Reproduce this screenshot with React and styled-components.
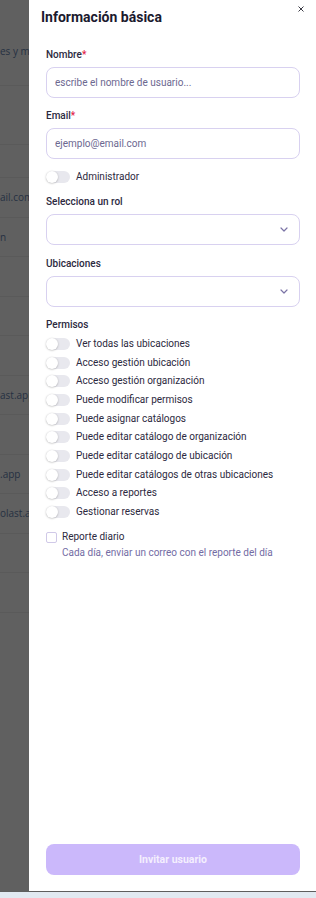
import React from 'react';
import styled, { createGlobalStyle } from 'styled-components';

const Global = createGlobalStyle`
  html, body { margin: 0; padding: 0; }
  body {
    width: 316px;
    height: 898px;
    overflow: hidden;
    font-family: Roboto, Inter, "Noto Sans", sans-serif;
    -webkit-font-smoothing: antialiased;
  }
  * { box-sizing: border-box; }
`;

const Screen = styled.div`
  width: 316px;
  height: 898px;
  display: flex;
  flex-direction: column;
`;

const Stage = styled.div`
  flex: 1;
  min-height: 0;
  display: flex;
`;

const BottomBar = styled.div`
  height: 7px;
  flex: none;
  border-top: 1px solid #5e5e5e;
  background: #e1e9f1;
`;

/* dimmed page behind the drawer */
const Backdrop = styled.div`
  width: 29px;
  flex: none;
  background: #606060;
  overflow: hidden;
  display: flex;
  flex-direction: column;
`;

const BgHeader = styled.div`
  height: 86px;
  flex: none;
  padding-top: 44px;
  border-bottom: 1px solid #5a5a5a;
`;

const BgRow = styled.div`
  height: ${(p) => p.$h}px;
  flex: none;
  display: flex;
  align-items: center;
  border-bottom: 1px solid #5a5a5a;
`;

const BgText = styled.span`
  display: block;
  white-space: nowrap;
  font-family: "Open Sans", "Noto Sans", sans-serif;
  font-size: 10px;
  line-height: 14px;
  color: #263042;
`;

/* drawer */
const Drawer = styled.aside`
  flex: 1;
  min-width: 0;
  background: #ffffff;
  display: flex;
  flex-direction: column;
`;

const Header = styled.header`
  display: flex;
  justify-content: space-between;
  align-items: flex-start;
  padding: 7px 10px 0 12px;
`;

const Title = styled.h2`
  margin: 0;
  font-size: 14px;
  line-height: 20px;
  font-weight: 700;
  color: #1b1a2e;
`;

const CloseButton = styled.button`
  width: 10px;
  height: 10px;
  margin-top: -3.5px;
  padding: 0;
  border: 0;
  background: none;
  display: flex;
  align-items: center;
  justify-content: center;
  color: #3a3a44;
  cursor: pointer;
`;

const Body = styled.div`
  padding: 20.6px 16px 0 17px;
  display: flex;
  flex-direction: column;
  gap: 11.3px;
`;

const Field = styled.div`
  display: flex;
  flex-direction: column;
  gap: 5px;
`;

const Label = styled.label`
  font-size: 10px;
  line-height: 14px;
  font-weight: 500;
  color: #2c2940;
`;

const Req = styled.span`
  color: #e11d48;
`;

const TextInput = styled.input`
  height: 31px;
  width: 100%;
  border: 1px solid #d8d1f0;
  border-radius: 8px;
  padding: 0 8px;
  font-family: inherit;
  font-size: 10px;
  color: #2c2940;
  background: #fff;
  outline: none;
  &::placeholder { color: #6c6890; }
`;

const Select = styled.div`
  height: 31px;
  border: 1px solid #d8d1f0;
  border-radius: 8px;
  display: flex;
  align-items: center;
  justify-content: flex-end;
  padding-right: 11px;
  color: #7b74a6;
`;

const ToggleRow = styled.div`
  display: flex;
  align-items: center;
  gap: 6px;
  height: 14px;
`;

const Track = styled.span`
  position: relative;
  width: 24px;
  height: 12px;
  flex: none;
  border-radius: 6px;
  background: #e8e8ee;
`;

const Knob = styled.span`
  position: absolute;
  left: 0;
  top: 0;
  width: 12px;
  height: 12px;
  border-radius: 50%;
  background: #ffffff;
  box-shadow: 0 0.5px 2px rgba(0, 0, 0, 0.28);
`;

const ToggleText = styled.span`
  font-size: 10px;
  line-height: 14px;
  font-weight: 400;
  color: #2c2940;
  white-space: nowrap;
`;

const ToggleList = styled.div`
  display: flex;
  flex-direction: column;
  gap: 4.67px;
`;

const Report = styled.div`
  display: flex;
  flex-direction: column;
  gap: 2px;
`;

const CheckRow = styled.div`
  display: flex;
  align-items: center;
  gap: 5px;
  height: 14px;
`;

const Box = styled.span`
  width: 11px;
  height: 11px;
  flex: none;
  border: 1px solid #d0c9e8;
  border-radius: 2px;
  background: #fff;
`;

const Hint = styled.p`
  margin: 0;
  padding-left: 16px;
  font-size: 10px;
  line-height: 14px;
  color: #736ca4;
`;

const Footer = styled.footer`
  margin-top: auto;
  padding: 0 16px 16px 17px;
`;

const SubmitButton = styled.button`
  width: 100%;
  height: 31px;
  border: 0;
  border-radius: 8px;
  background: #cbb8fb;
  color: #f4effe;
  font-family: inherit;
  font-size: 10.5px;
  font-weight: 700;
  cursor: not-allowed;
`;

const Toggle = ({ label }) => (
  <ToggleRow>
    <Track>
      <Knob />
    </Track>
    <ToggleText>{label}</ToggleText>
  </ToggleRow>
);

const Chevron = () => (
  <svg width="8" height="5" viewBox="0 0 8 5" fill="none">
    <polyline points="1,1 4,4 7,1" stroke="currentColor" strokeWidth="1.2" strokeLinecap="round" strokeLinejoin="round" />
  </svg>
);

const CloseIcon = () => (
  <svg width="6" height="6" viewBox="0 0 6 6" fill="none">
    <line x1="0.5" y1="0.5" x2="5.5" y2="5.5" stroke="currentColor" strokeWidth="1" />
    <line x1="5.5" y1="0.5" x2="0.5" y2="5.5" stroke="currentColor" strokeWidth="1" />
  </svg>
);

const permisos = [
  'Ver todas las ubicaciones',
  'Acceso gestión ubicación',
  'Acceso gestión organización',
  'Puede modificar permisos',
  'Puede asignar catálogos',
  'Puede editar catálogo de organización',
  'Puede editar catálogo de ubicación',
  'Puede editar catálogos de otras ubicaciones',
  'Acceso a reportes',
  'Gestionar reservas',
];

const bgRows = [
  { h: 59, t: '' },
  { h: 33, t: '' },
  { h: 39.5, t: 'ail.com' },
  { h: 39.5, t: 'n' },
  { h: 39.5, t: '' },
  { h: 39.5, t: '' },
  { h: 39.5, t: '' },
  { h: 39.5, t: 'ast.app' },
  { h: 39.5, t: '' },
  { h: 39.5, t: '.app' },
  { h: 39.5, t: 'olast.ap' },
  { h: 39.5, t: '' },
  { h: 39.5, t: '' },
];

export default function App() {
  return (
    <>
      <Global />
      <Screen>
        <Stage>
          <Backdrop>
            <BgHeader>
              <BgText>es y m</BgText>
            </BgHeader>
            {bgRows.map((r, i) => (
              <BgRow key={i} $h={r.h}>
                {r.t && <BgText>{r.t}</BgText>}
              </BgRow>
            ))}
          </Backdrop>
          <Drawer>
            <Header>
              <Title>Información básica</Title>
              <CloseButton aria-label="Cerrar">
                <CloseIcon />
              </CloseButton>
            </Header>
            <Body>
              <Field>
                <Label>
                  Nombre<Req>*</Req>
                </Label>
                <TextInput placeholder="escribe el nombre de usuario..." />
              </Field>
              <Field>
                <Label>
                  Email<Req>*</Req>
                </Label>
                <TextInput placeholder="ejemplo@email.com" />
              </Field>
              <Toggle label="Administrador" />
              <Field>
                <Label>Selecciona un rol</Label>
                <Select>
                  <Chevron />
                </Select>
              </Field>
              <Field>
                <Label>Ubicaciones</Label>
                <Select>
                  <Chevron />
                </Select>
              </Field>
              <Field>
                <Label>Permisos</Label>
                <ToggleList>
                  {permisos.map((p) => (
                    <Toggle key={p} label={p} />
                  ))}
                </ToggleList>
              </Field>
              <Report>
                <CheckRow>
                  <Box />
                  <ToggleText>Reporte diario</ToggleText>
                </CheckRow>
                <Hint>Cada día, enviar un correo con el reporte del día</Hint>
              </Report>
            </Body>
            <Footer>
              <SubmitButton disabled>Invitar usuario</SubmitButton>
            </Footer>
          </Drawer>
        </Stage>
        <BottomBar />
      </Screen>
    </>
  );
}
